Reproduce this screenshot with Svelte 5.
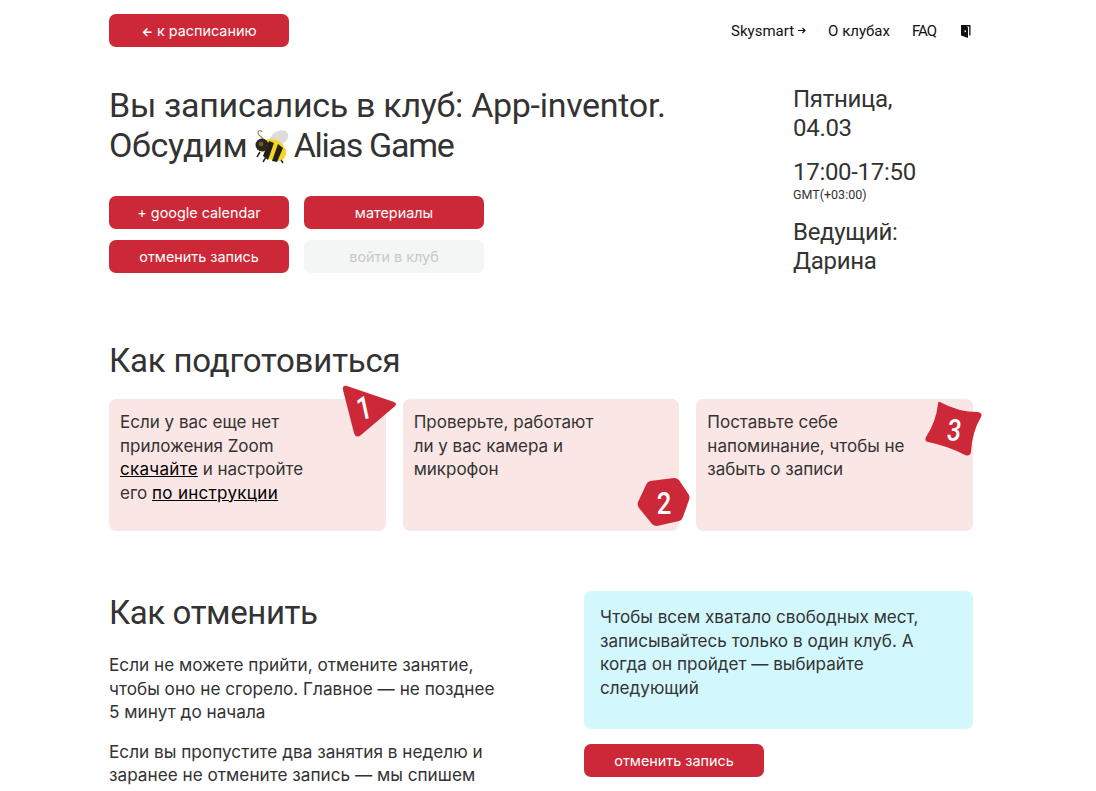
<script>
  const cards = [
    { id: 1 },
    { id: 2, lines: 'Проверьте, работают<br>ли у вас камера и<br>микрофон' },
    { id: 3, lines: 'Поставьте себе<br>напоминание, чтобы не<br>забыть о записи' }
  ];
</script>

<div class="page">
  <header class="top">
    <button class="btn"><span class="arrow">←</span> к расписанию</button>
    <nav class="nav">
      <span class="sky">Skysmart
        <svg width="8" height="7" viewBox="0 0 8 7" aria-hidden="true">
          <path d="M0 3.5h7M4.5 1l2.5 2.5L4.5 6" fill="none" stroke="#111" stroke-width="1.2" />
        </svg>
      </span>
      <span>О клубах</span>
      <span class="faq">FAQ</span>
      <svg class="door" width="11" height="14" viewBox="0 0 11 14" aria-hidden="true">
        <path d="M1 1h9.5v10.5H9.2V2.4H6.5L8 3.4V14L1 11.5z" fill="#111" />
        <rect x="4.6" y="6.4" width="1.3" height="1.7" fill="#fff" />
      </svg>
    </nav>
  </header>

  <section class="hero">
    <div class="hero-main">
      <h1>
        Вы записались в клуб: App-inventor.<br />Обсудим
        <svg class="bee" width="36" height="36" viewBox="0 0 36 36" aria-hidden="true">
          <ellipse cx="25" cy="9" rx="10" ry="7" fill="#dcdcd8" transform="rotate(-30 25 9)" />
          <path d="M9 10C8 7 4 7 4 4c0-3 4-3 4-1" fill="none" stroke="#9a8a66" stroke-width="1.2" />
          <ellipse cx="20" cy="21" rx="13" ry="10" fill="#f7d51d" transform="rotate(35 20 21)" />
          <path d="M15 12l-6 15 5 4 6-17zM24 15l-6 17 5 1 6-14z" fill="#23201a" />
          <circle cx="8" cy="16" r="6.5" fill="#2b2620" />
          <circle cx="7" cy="15" r="2.4" fill="#6d5a30" />
          <path d="M6 23l-3 5M12 28l-3 5M27 31l2 3" stroke="#2b2620" stroke-width="1.5" fill="none" />
        </svg>
        <span class="game">Alias Game</span>
      </h1>
      <div class="actions">
        <button class="btn">+ google calendar</button>
        <button class="btn">материалы</button>
        <button class="btn">отменить запись</button>
        <button class="btn off">войти в клуб</button>
      </div>
    </div>
    <aside class="info">
      <p>Пятница,<br />04.03</p>
      <p class="time">17:00-17:50<small>GMT(+03:00)</small></p>
      <p>Ведущий:<br />Дарина</p>
    </aside>
  </section>

  <section class="prep">
    <h2>Как подготовиться</h2>
    <div class="cards">
      {#each cards as card}
        <div class="card">
          {#if card.lines}
            <p>{@html card.lines}</p>
          {:else}
            <p>Если у вас еще нет<br />приложения Zoom<br /><a href="#a">скачайте</a> и настройте<br />его <a href="#b">по инструкции</a></p>
          {/if}
          <div class="badge b{card.id}">
            {#if card.id === 1}
              <svg width="56" height="58" viewBox="0 0 56 58"><path d="M5 4 L52 20 Q56 22 52 25 L19 53 Q14 57 12 51 L1 8 Q0 3 5 4Z" fill="#cc2837" /></svg>
            {:else if card.id === 2}
              <svg width="54" height="52" viewBox="0 0 54 52"><path d="M13 4 L37 1 Q40 1 42 3 L52 18 Q53 21 52 23 L46 40 Q45 43 42 44 L20 49 Q17 49 15 47 L2 31 Q0 28 1 25 L9 8 Q10 5 13 4Z" fill="#cc2837" /></svg>
            {:else}
              <svg width="60" height="58" viewBox="0 0 60 58"><path d="M16 2 Q34 12 54 12 Q59 13 57 17 Q48 32 47 52 Q46 57 41 55 Q24 46 4 42 Q0 41 2 37 Q12 22 14 4 Q14 1 16 2Z" fill="#cc2837" /></svg>
            {/if}
            <span>{card.id}</span>
          </div>
        </div>
      {/each}
    </div>
  </section>

  <section class="cancel">
    <div class="cancel-text">
      <h2>Как отменить</h2>
      <p>Если не можете прийти, отмените занятие,<br />чтобы оно не сгорело. Главное — не позднее<br />5 минут до начала</p>
      <p>Если вы пропустите два занятия в неделю и<br />заранее не отмените запись — мы спишем</p>
    </div>
    <div class="cancel-side">
      <div class="note">Чтобы всем хватало свободных мест,<br />записывайтесь только в один клуб. А<br />когда он пройдет — выбирайте<br />следующий</div>
      <button class="btn">отменить запись</button>
    </div>
  </section>
</div>

<style>
  :global(body) {
    background: #fff;
  }

  .page {
    width: 864px;
    margin-left: 109px;
    padding-top: 14px;
    color: #333;
    font-family: Inter, "Noto Sans", sans-serif;
  }

  .top {
    display: flex;
    justify-content: space-between;
    align-items: center;
  }

  .nav {
    display: flex;
    align-items: center;
    gap: 22px;
    margin-right: 2px;
    color: #111;
    font-family: Roboto, sans-serif;
    font-size: 15px;
  }

  .sky {
    display: flex;
    align-items: center;
    gap: 4px;
  }

  .door {
    margin-left: 2px;
  }

  .faq {
    letter-spacing: -1px;
  }

  .arrow {
    font-size: 12px;
    font-weight: 700;
  }

  .btn {
    display: block;
    width: 180px;
    height: 33px;
    padding: 0;
    border: 0;
    border-radius: 7px;
    background: #cc2837;
    color: #fff;
    font-family: Inter, sans-serif;
    font-size: 14.4px;
  }

  .btn.off {
    background: #f4f5f5;
    color: #c8c9ca;
  }

  .hero {
    display: flex;
    justify-content: space-between;
    margin-top: 39px;
  }

  h1,
  h2 {
    margin: 0;
    font-family: Roboto, sans-serif;
    font-weight: 400;
  }

  h1 {
    font-size: 34px;
    line-height: 39.5px;
    letter-spacing: -0.3px;
  }

  h2 {
    font-size: 33px;
    line-height: 46px;
    letter-spacing: -0.2px;
  }

  .bee {
    margin: 0 -4px 0 -2px;
    vertical-align: -8px;
  }

  .game {
    letter-spacing: -1.3px;
  }

  .actions {
    display: grid;
    grid-template-columns: 180px 180px;
    gap: 11px 15px;
    margin-top: 31px;
  }

  .info {
    width: 180px;
    margin-top: -1px;
    font-family: Roboto, sans-serif;
    font-size: 24px;
    line-height: 29px;
    letter-spacing: -0.3px;
  }

  .info p {
    margin: 0 0 15px;
  }

  .info p:last-child {
    margin-bottom: 0;
  }

  .time small {
    display: block;
    font-size: 12.5px;
    line-height: 16px;
    letter-spacing: 0;
  }

  .prep {
    margin-top: 62px;
  }

  .cards {
    display: grid;
    grid-template-columns: repeat(3, 1fr);
    gap: 17px;
    margin-top: 15px;
  }

  .card {
    position: relative;
    height: 132px;
    padding: 12px 11px;
    box-sizing: border-box;
    border-radius: 7px;
    background: #fae6e5;
    font-size: 17px;
    line-height: 23.5px;
  }

  .card p {
    margin: 0;
  }

  .card a {
    color: #000;
    letter-spacing: 0.3px;
  }

  .badge {
    position: absolute;
    color: #fff;
  }

  .badge svg {
    display: block;
  }

  .badge span {
    position: absolute;
    font-family: Roboto, sans-serif;
    font-size: 32px;
    font-weight: 500;
    line-height: 32px;
    transform: translate(-50%, -50%) scaleX(0.8);
  }

  .b1 {
    left: 233px;
    top: -17px;
  }

  .b1 span {
    left: 22px;
    top: 26px;
    transform: translate(-50%, -50%) rotate(-12deg) scaleX(0.8);
  }

  .b2 {
    left: 234px;
    top: 78px;
  }

  .b2 span {
    left: 27px;
    top: 26px;
  }

  .b3 {
    left: 228px;
    top: 1px;
  }

  .b3 span {
    left: 30px;
    top: 30px;
    font-style: italic;
  }

  .cancel {
    display: flex;
    justify-content: space-between;
    margin-top: 60px;
  }

  .cancel-text {
    width: 400px;
    font-size: 17.2px;
    line-height: 23.5px;
  }

  .cancel-text h2 {
    margin-top: -1px;
    margin-bottom: 17px;
    letter-spacing: -0.4px;
  }

  .cancel-text p {
    margin: 0 0 16px;
  }

  .cancel-side {
    width: 389px;
  }

  .note {
    height: 138px;
    padding: 14px 16px;
    box-sizing: border-box;
    border-radius: 7px;
    background: #d2f8fe;
    font-size: 17.1px;
    line-height: 23.5px;
    margin-bottom: 15px;
  }
</style>
